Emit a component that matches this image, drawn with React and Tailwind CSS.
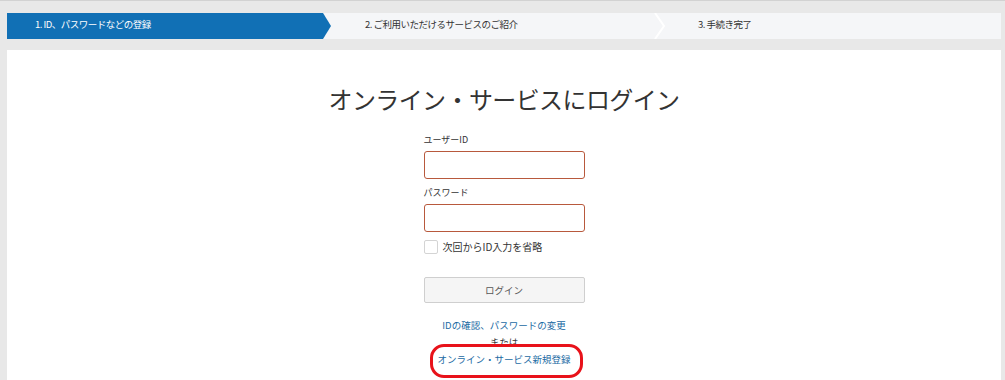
import React from 'react';

const font = { fontFamily: '"Noto Sans CJK JP", "Noto Sans", sans-serif' };

const steps = [
  { label: '1. ID、パスワードなどの登録', active: true },
  { label: '2. ご利用いただけるサービスのご紹介' },
  { label: '3. 手続き完了' },
];

const StepBar = () => (
  <div className="grid grid-cols-[324px_333px_1fr] h-[26px] bg-[#f5f6f8]">
    {steps.map((s, i) => (
      <div key={i} className="relative flex items-center">
        {s.active && (
          <div className="absolute inset-0 bg-[#1170b5] [clip-path:polygon(0_0,calc(100%-8px)_0,100%_50%,calc(100%-8px)_100%,0_100%)]" />
        )}
        <span
          className={`relative text-[9.5px] leading-none tracking-[-0.5px] pb-[2px] whitespace-pre ${i === 0 ? 'pl-[28px] text-white' : 'pl-[34px] text-[#333]'}`}
        >
          {s.label}
        </span>
        {i === 1 && (
          <svg className="absolute right-[-2px] top-0" width="12" height="26" viewBox="0 0 12 26">
            <polyline points="1,0 10,13 1,26" fill="none" stroke="#ffffff" strokeWidth="2" />
          </svg>
        )}
      </div>
    ))}
  </div>
);

const Field = ({ label }) => (
  <div>
    <div className="text-[9px] leading-[14px] text-[#333] mb-[4px]">{label}</div>
    <input
      type="text"
      className="block w-full h-[28px] border border-[#b8593d] rounded-[3px] bg-white outline-none"
    />
  </div>
);

export default function App() {
  return (
    <div className="min-h-[380px] bg-[#e8e8e8] border-t border-[#d2d2d2] pl-[7px] pr-[4px] pt-[12px] overflow-hidden" style={font}>
      <StepBar />
      <div className="mt-[11px] bg-white h-[330px] flex flex-col items-center">
        <h1 className="mt-[35px] text-[24px] leading-[28px] text-[#333] tracking-[-0.6px]">
          オンライン・サービスにログイン
        </h1>
        <div className="w-[161px] mt-[20px] flex flex-col gap-[7px]">
          <Field label="ユーザーID" />
          <Field label="パスワード" />
        </div>
        <label className="w-[161px] mt-[8px] flex items-center gap-[5px]">
          <span className="w-[14px] h-[14px] border border-[#d4d4d4] rounded-[2px] bg-white" />
          <span className="text-[10px] leading-[14px] text-[#333]">次回からID入力を省略</span>
        </label>
        <button className="mt-[23px] w-[161px] h-[26px] bg-[#f5f5f5] border border-[#cfcfcf] rounded-[2px] text-[9.5px] text-[#555]">
          ログイン
        </button>
        <div className="mt-[14px] flex flex-col items-center text-[9.5px] leading-[17px]">
          <a href="#" className="text-[#1a6aa3]">IDの確認、パスワードの変更</a>
          <span className="text-[#333]">または</span>
          <span className="relative">
            <a href="#" className="text-[#1a6aa3]">オンライン・サービス新規登録</a>
            <span className="absolute left-[-7px] right-[-12px] top-[-7px] bottom-[-10px] border-[3px] border-[#e8121a] rounded-[14px]" />
          </span>
        </div>
      </div>
    </div>
  );
}
